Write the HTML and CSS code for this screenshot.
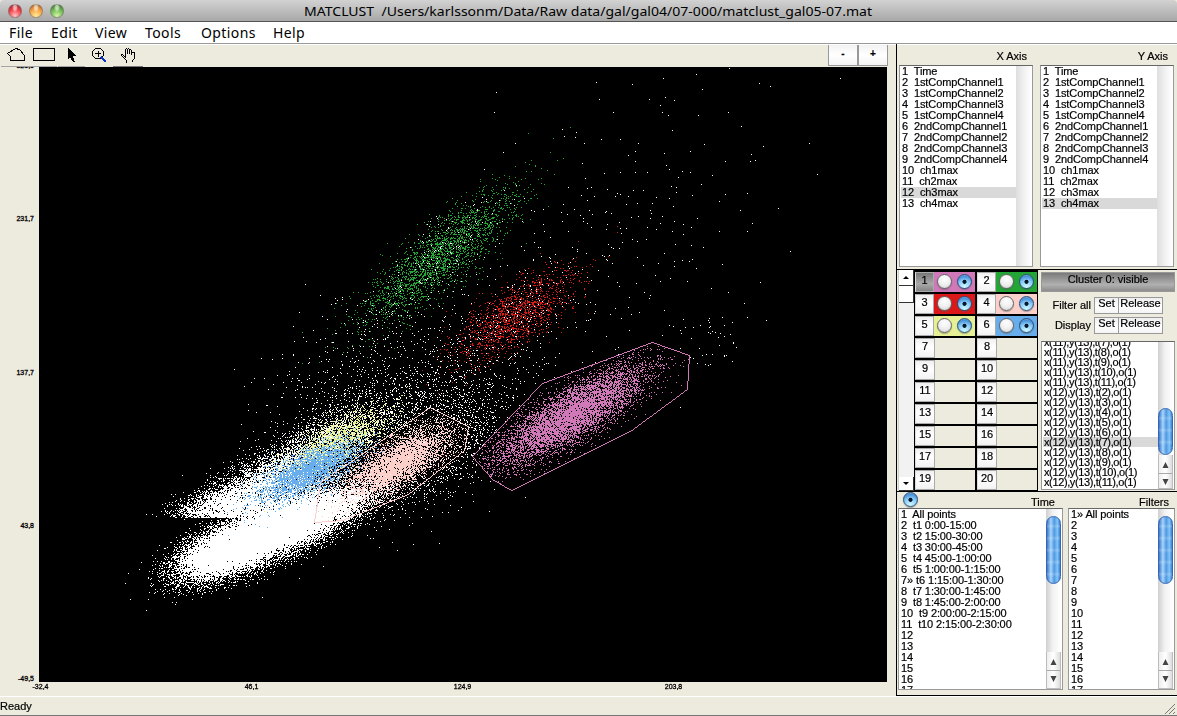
FILE: index.html
```html
<!DOCTYPE html>
<html lang="en">
<head>
<meta charset="utf-8">
<title>MATCLUST</title>
<link rel="stylesheet" href="styles.css">
</head>
<body>
<header class="titlebar">
  <div class="lights"><i class="light red"></i><i class="light amber"></i><i class="light green"></i></div>
  <svg class="title" width="570" height="20"><text x="0" y="16" textLength="568" lengthAdjust="spacingAndGlyphs" xml:space="preserve">MATCLUST  /Users/karlssonm/Data/Raw data/gal/gal04/07-000/matclust_gal05-07.mat</text></svg>
</header>
<nav class="menubar"><span class="m-file">File</span><span class="m-edit">Edit</span><span class="m-view">View</span><span class="m-tools">Tools</span><span class="m-options">Options</span><span class="m-help">Help</span></nav>
<main class="workspace">
  <section class="plot-pane">
    <div class="toolbar">
      <svg class="tools" width="145" height="22" shape-rendering="crispEdges" fill="none" stroke="#000">
        <path d="M7.5 8.5 15.5 3.5 19.5 4.5 24.5 10.500 24.5 15.500 10.500 15.500 10.500 11.500Z"/>
        <path d="M33.500 3.500H54.500V15.500H33.500Z"/>
        <path d="M68 3V14L70 12 73 17H75L73 11H76Z" fill="#000" stroke="none"/>
        <circle cx="98" cy="8.500" r="5.500"/><path d="M95 8.500h6M98.500 6v6"/>
        <path d="M101 12l5 5" stroke="#1238c8" stroke-width="2.500"/>
        <path d="M126.500 17.500v-2l-5-5v-1h1l3 3V4.500l1-1 1 1v4M127.500 4.500l1-1 1 1v4M129.500 5.500l1-1 1 1v4M132.500 8v-1h2v6l-2 3v1"/>
        <path d="M1 21.500H57M58 21.500H85" stroke="#a4a4a8"/><path d="M113 21.500H143" stroke="#77777c"/>
      </svg>
      <div class="zoomers"><span>-</span><span>+</span></div>
    </div>
    <div class="plot-row">
      <div class="y-ticks"><span>325,5</span><span>231,7</span><span>137,7</span><span>43,8</span><span>-49,5</span></div>
      <canvas id="plot" width="848" height="615"></canvas>
    </div>
    <div class="x-ticks"><span>-32,4</span><span>46,1</span><span>124,9</span><span>203,8</span></div>
  </section>
  <aside class="controls">
    <section class="axes">
      <div class="axis"><h2>X Axis</h2><div class="list" id="xlist"></div></div>
      <div class="axis"><h2>Y Axis</h2><div class="list" id="ylist"></div></div>
    </section>
    <section class="clusters">
      <div class="slider"><b class="up"></b><b class="knob"></b><span class="track"></span><b class="down"></b></div>
      <div class="cluster-grid" id="grid"></div>
      <div class="cluster-side">
        <button class="visible">Cluster 0: visible</button>
        <div class="actions"><label>Filter all</label><button>Set</button><button>Release</button></div>
        <div class="actions second"><label>Display</label><button>Set</button><button>Release</button></div>
        <div class="list tight" id="history"></div>
      </div>
    </section>
    <section class="filters">
      <div class="filter-head"><i class="radio on"></i><h2 class="time-title">Time</h2><h2 class="filter-title">Filters</h2></div>
      <div class="filter-lists"><div class="list time" id="times"></div><div class="list" id="filters"></div></div>
    </section>
  </aside>
</main>
<footer class="status"><span>Ready</span><svg width="12" height="12" stroke="#777"><path d="M1 11 11 1M5 11 11 5M9 11 11 9"/></svg></footer>
<script src="app.js"></script>
</body>
</html>
```
FILE: styles.css
```css
* { box-sizing: border-box; }
body { margin: 0; width: 1177px; height: 716px; overflow: hidden; display: flex; flex-direction: column; background: #edeade; color: #000; font: 11px/11px "Liberation Sans", Arial, sans-serif; -webkit-text-stroke: .2px #000; }
h2 { margin: 0; font-size: 11px; font-weight: 400; }
button { font: inherit; color: #000; padding: 0; margin: 0; border: 1px solid #999; border-radius: 0; }
.titlebar { height: 22px; flex: none; display: flex; border-bottom: 1px solid #555; background: linear-gradient(#d2d2d2, #a8a8a8); border-radius: 4px 4px 0 0; -webkit-text-stroke: 0; }
.lights { display: flex; gap: 7px; padding: 4px 0 0 8px; width: 304px; }
.light { width: 14px; height: 14px; border-radius: 50%; border: 1px solid #7779; }
.red { background: radial-gradient(ellipse at 50% 20%, #fff9 0 15%, transparent 35%), radial-gradient(circle at 50% 90%, #ffc5c5, #ef4048 55%, #8e1c20); }
.amber { background: radial-gradient(ellipse at 50% 20%, #fff9 0 15%, transparent 35%), radial-gradient(circle at 50% 90%, #fff09a, #f4a044 55%, #a25a18); }
.green { background: radial-gradient(ellipse at 50% 20%, #fff9 0 15%, transparent 35%), radial-gradient(circle at 50% 90%, #d6f7a6, #70b854 55%, #326c24); }
.title { font: 13px "Noto Sans", sans-serif; }
.menubar { height: 22px; flex: none; background: #fff; border-bottom: 1px solid #999; display: flex; padding-left: 9px; font: 400 14px/21px "Noto Sans", sans-serif; letter-spacing: .4px; -webkit-text-stroke: 0; }
.m-file { width: 42px; } .m-edit { width: 44px; } .m-view { width: 50px; } .m-tools { width: 56px; } .m-options { width: 72px; }
.workspace { height: 652px; flex: none; display: flex; }
.plot-pane { width: 896px; border-top: 1px solid #fff; }
.toolbar { height: 22px; display: flex; justify-content: space-between; position: relative; }
.tools { background: #edeade; }
.zoomers { display: flex; width: 60px; margin-right: 8px; height: 21px; }
.zoomers span { width: 30px; border: 1px solid #999; border-top: 0; background: linear-gradient(#f2f2f2, #fff 50%, #f4f4f4); text-align: center; line-height: 18px; font-size: 10px; font-weight: 700; }
.plot-row { display: flex; height: 615px; }
.y-ticks { width: 39px; padding-right: 5px; text-align: right; display: flex; flex-direction: column; justify-content: space-between; font: 7px/8px "Liberation Sans", sans-serif; -webkit-text-stroke: .3px #000; margin: -5px 0 0; height: 621px; }
#plot { display: block; }
.x-ticks { display: flex; font: 7px/9px "Liberation Sans", sans-serif; -webkit-text-stroke: .3px #000; margin-left: -65px; }
.x-ticks span { width: 211px; text-align: center; }
.controls { width: 281px; border-left: 1px solid #000; border-bottom: 1px solid #000; display: flex; flex-direction: column; height: 652px; }
.axes { height: 226px; display: flex; gap: 6px; padding: 1px 2px 0; border-bottom: 1px solid #000; border-top: 1px solid #fff; }
.axis { width: 135px; }
.axis h2 { text-align: right; padding: 5px 7px 0 0; height: 19px; }
.list { display: flex; overflow: hidden; background: #fff; border: 1px solid #999; border-top-color: #666; }
.axis .list { height: 202px; width: 134px; }
.rows { flex: 1; padding: 0 0 0 1px; white-space: pre; }
.row { height: 11px; line-height: 11px; padding-left: 1px; font-size: 11px; letter-spacing: -.1px; }
.row.sel { background: #d9d9d9; }
.bar { width: 16px; flex: none; background: linear-gradient(90deg, #dedede, #f3f3f3 55%, #fff); }
.clusters { height: 222px; display: flex; border-bottom: 1px solid #000; padding-left: 1px; }
.slider { width: 16px; flex: none; display: flex; flex-direction: column; background: #f2f2f2; border-left: 1px solid #ccc; }
.slider b { background: #fff; border-right: 1px solid #333; border-bottom: 1px solid #333; display: flex; align-items: center; justify-content: center; }
.up { height: 16px; } .knob { height: 17px; } .track { flex: 1; } .down { height: 14px; }
.up::before, .down::before { content: ""; border: 3px solid transparent; border-top: 0; border-bottom: 3px solid #000; }
.down::before { border-top: 3px solid #000; border-bottom: 0; }
.cluster-grid { width: 124px; flex: none; background: #000; padding: 2px 1px 0; display: grid; grid-template-columns: 60px 60px; grid-auto-rows: 20px; gap: 2px; }
.cell { display: flex; background: #edeade; }
.num { width: 20px; background: linear-gradient(#f0f0f0, #fff 45%, #f2f2f2); border: 1px solid #aaa; border-left-color: #ddd; text-align: center; line-height: 14px; }
.num.active { background: linear-gradient(#777, #a9a9a9 60%, #858585); }
.swatch { flex: 1; display: flex; gap: 5px; padding: 2px 3px; }
.radio { width: 15px; height: 15px; border-radius: 50%; flex: none; border: 1px solid #666; background: radial-gradient(circle at 50% 30%, #fff, #eee 55%, #c8c8c8); box-shadow: 0 1px 1px #5557; }
.radio.on { border-color: #285079; background: radial-gradient(circle at 50% 52%, #07192c 0 1.700px, transparent 2.400px), radial-gradient(circle at 50% 95%, #d5faff, #8accf8 50%, #4a90d8 78%, #a9cdec); }
.cluster-side { width: 134px; flex: none; margin-left: 3px; padding-top: 2px; display: flex; flex-direction: column; }
.visible { height: 20px; background: linear-gradient(#7b7b7b, #b0b0b0 65%, #8d8d8d); padding-bottom: 5px; flex: none; }
.actions { height: 17px; display: flex; margin-top: 5px; }
.actions.second { margin-top: 3px; }
.actions label { width: 53px; padding-right: 3px; text-align: right; line-height: 17px; }
.actions button { width: 25px; height: 17px; background: linear-gradient(#eee, #fff 55%, #f4f4f4); padding-bottom: 4px; }
.actions button + button { width: 45px; margin-left: -1px; }
.tight { height: 149px; margin-top: 7px; }
.tight .rows { padding-top: 0; margin-top: -5px; }
.tight .row { height: 10px; line-height: 11px; letter-spacing: -.38px; }
.scroll { display: flex; flex-direction: column; width: 15px; margin-right: 1px; background: linear-gradient(90deg, #cfcfcf, #f2f2f2 45%, #fff); flex: none; padding-top: 7px; }
.tight .scroll { padding-top: 66px; }
.thumb { height: 68px; flex: none; border: 1px solid #3467b5; border-radius: 8px; background: repeating-linear-gradient(#fff0 0 7px, #fff3 9px, #fff0 12px), linear-gradient(90deg, #3676c9, #a9d5fb 30%, #4f98e0 55%, #80c4f8 80%, #3d7fd0); }
.tight .thumb { height: 47px; }
.arrows { margin-top: auto; height: 37px; border: 1px solid #bbb; border-top: 0; background: linear-gradient(90deg, #eee, #fff 50%, #ddd); }
.tight .arrows { height: 34px; }
.arrows svg { display: block; }
.filters { display: flex; flex-direction: column; }
.filter-head { display: flex; height: 16px; padding: 0 0 0 6px; }
.time-title { width: 137px; text-align: right; padding-top: 5px; }
.filter-title { width: 114px; text-align: right; padding-top: 5px; }
.filter-lists { display: flex; gap: 5px; padding: 0 2px 0 1px; height: 182px; }
.filter-lists .list { width: 107px; }
.filter-lists .list.time { width: 165px; }
.status { height: 20px; flex: none; border-top: 1px solid #fff; border-bottom: 1px solid #777; display: flex; justify-content: space-between; padding: 3px 1px 0 0; line-height: 12px; }
.status svg { margin-top: 3px; }
```
FILE: app.js
```js
const el = id => document.getElementById(id);
const bar = '<div class="bar"></div>';
const scroll = '<div class="scroll"><div class="thumb"></div><div class="arrows"><svg width="13" height="36" fill="#444"><path d="M3.500 13h6L6.500 7zM3.500 24h6l-3 6z"/><path d="M0 18.500h13" stroke="#aaa"/></svg></div></div>';
function fill(id, rows, selected, tail) {
  el(id).innerHTML = '<div class="rows">' + rows.map((t, i) => `<div class="row${i === selected ? ' sel' : ''}">${t}</div>`).join('') + '</div>' + tail;
}
const params = ['Time'];
for (const k of ['1st', '2nd']) for (let i = 1; i < 5; i++) params.push(k + 'CompChannel' + i);
for (let i = 1; i < 5; i++) params.push('ch' + i + 'max');
const numbered = params.map((p, i) => (i + 1) + '  ' + p);
fill('xlist', numbered, 11, bar);
fill('ylist', numbered, 12, bar);
const hist = [];
for (let t = 7; t < 12; t++) hist.push(`x(11),y(13),t(${t}),o(1)`);
for (let t = 2; t < 12; t++) hist.push(`x(12),y(13),t(${t}),o(1)`);
fill('history', hist, 10, scroll);
const times = ['1  All points', '2  t1 0:00-15:00', '3  t2 15:00-30:00', '4  t3 30:00-45:00', '5  t4 45:00-1:00:00', '6  t5 1:00:00-1:15:00', '7» t6 1:15:00-1:30:00', '8  t7 1:30:00-1:45:00', '9  t8 1:45:00-2:00:00', '10  t9 2:00:00-2:15:00', '11  t10 2:15:00-2:30:00', '12', '13', '14', '15', '16', '17'];
fill('times', times, -1, scroll);
fill('filters', times.map((_, i) => i ? String(i + 1) : '1» All points'), -1, scroll);

const colors = ['#d078b8', '#24a637', '#dc1818', '#fbd0ca', '#e6f095', '#68aeec'];
let cells = '';
for (let i = 1; i <= 20; i++) {
  const c = colors[i - 1];
  cells += `<div class="cell"><span class="num${i === 1 ? ' active' : ''}">${i}</span>` +
    (c ? `<span class="swatch" style="background:${c}"><i class="radio"></i><i class="radio on"></i></span>` : '') + '</div>';
}
el('grid').innerHTML = cells;

// Scatter plot, in window coordinates
const g = el('plot').getContext('2d');
g.fillStyle = '#000';
g.fillRect(0, 0, 848, 615);
g.translate(-39, -67);
let seed = 1234567;
function rnd() {
  seed = (seed + 0x6D2B79F5) | 0;
  let t = Math.imul(seed ^ seed >>> 15, 1 | seed);
  t = t + Math.imul(t ^ t >>> 7, 61 | t) ^ t;
  return ((t ^ t >>> 14) >>> 0) / 4294967296;
}
const gauss = () => Math.sqrt(-2 * Math.log(rnd() + 1e-12)) * Math.cos(2 * Math.PI * rnd());
function inside(p, x, y) {
  let r = false;
  for (let i = 0, j = p.length - 1; i < p.length; j = i++)
    if ((p[i][1] > y) !== (p[j][1] > y) && x < (p[j][0] - p[i][0]) * (y - p[i][1]) / (p[j][1] - p[i][1]) + p[i][0]) r = !r;
  return r;
}
function cloud(color, n, cx, cy, deg, sl, ss, keep) {
  const a = deg * Math.PI / 180, c = Math.cos(a), s = Math.sin(a);
  g.fillStyle = color;
  for (let i = 0; i < n; i++) {
    const u = gauss() * sl, v = gauss() * ss;
    const x = Math.round(cx + u * c + v * s), y = Math.round(cy - u * s + v * c);
    if (!keep || keep(x, y)) g.fillRect(x, y, 1, 1);
  }
}
const magenta = [[652, 342], [689, 355], [687, 389], [630, 431], [511, 490], [492, 479], [472, 456], [542, 383]];
const pink = [[430, 407], [468, 426], [464, 450], [408, 494], [342, 520], [314, 522], [320, 482]];
const outer = (x, y) => (!inside(magenta, x, y) || rnd() < .03) && (!inside(pink, x, y) || y > 495 || rnd() < .35);
const W = '#fff';
cloud(W, 17000, 234, 546, 24, 29, 11.5);
cloud(W, 22000, 303, 517, 27, 41, 12, (x, y) => !inside(pink, x, y) || y > 488 || rnd() < .4);
cloud(W, 9000, 262, 492, 30, 38, 14, (x, y) => y < 518 || x > 240);
cloud(W, 2600, 222, 505, 15, 25, 9, (x, y) => y < 518);
cloud(W, 2200, 322, 447, 34, 44, 17);
cloud(W, 2200, 425, 448, 32, 45, 25, outer);
cloud(W, 850, 400, 405, 25, 65, 35, outer);
cloud(W, 230, 350, 350, 38, 55, 25, outer);
cloud(W, 380, 510, 330, 38, 95, 40, outer);
cloud(W, 190, 630, 235, 45, 115, 65, outer);
cloud(W, 60, 700, 350, 35, 30, 18, outer);
cloud('#000', 1500, 365, 461, 32, 24, 9);
cloud(colors[4], 2300, 335, 443, 30, 29, 11);
cloud(colors[5], 4000, 310, 470, 27, 28, 10);
cloud(colors[3], 5200, 398, 462, 30, 29, 11, (x, y) => inside(pink, x, y));
cloud(colors[1], 2500, 440, 256, 40, 49, 14);
cloud(W, 150, 445, 250, 39, 45, 15);
cloud(colors[2], 1500, 514, 316, 34, 36, 14);
cloud(W, 120, 515, 315, 34, 38, 14);
cloud(colors[0], 7500, 570, 415, 31, 45, 13, (x, y) => inside(magenta, x, y));

// One-pixel polygon outlines
function outline(p, color) {
  g.fillStyle = color;
  p.forEach((a, i) => {
    const b = p[(i + 1) % p.length], n = Math.max(Math.abs(b[0] - a[0]), Math.abs(b[1] - a[1]));
    for (let k = 0; k < n; k++) g.fillRect(Math.round(a[0] + (b[0] - a[0]) * k / n), Math.round(a[1] + (b[1] - a[1]) * k / n), 1, 1);
  });
}
outline(magenta, colors[0]);
outline(pink, colors[3]);
```
